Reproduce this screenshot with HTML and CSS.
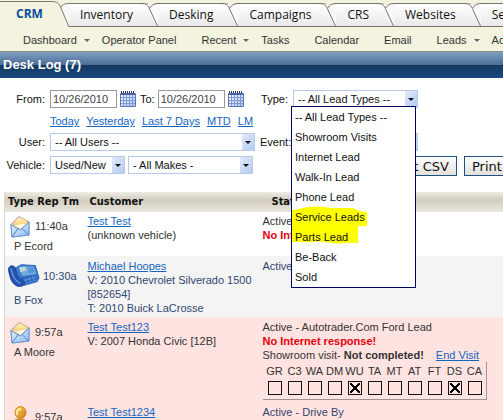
FILE: index.html
```html
<!DOCTYPE html>
<html lang="en">
<head>
<meta charset="utf-8">
<title>Desk Log</title>
<link rel="stylesheet" href="styles.css">
</head>
<body>
<svg class="defs" aria-hidden="true">
  <defs>
    <linearGradient id="g-env" x1="0" y1="0" x2="1" y2="1"><stop offset="0" stop-color="#e4f3fd"/><stop offset="1" stop-color="#8dbcf0"/></linearGradient>
    <linearGradient id="g-flap" x1="0" y1="0" x2="0" y2="1"><stop offset="0" stop-color="#fff3c4"/><stop offset="1" stop-color="#f3bf4c"/></linearGradient>
    <linearGradient id="g-man" x1="0" y1="0" x2="1" y2="1"><stop offset="0" stop-color="#ffd766"/><stop offset="1" stop-color="#cf7a12"/></linearGradient>
    <linearGradient id="g-cal" x1="0" y1="0" x2="1" y2="1"><stop offset="0" stop-color="#fff"/><stop offset="1" stop-color="#a9c0ee"/></linearGradient>
    <symbol id="edge" viewBox="0 0 20 24" preserveAspectRatio="none"><path d="M0 .5C7 .5 8 2 10 7L18 24H20V.5Z" fill="#f8f8f8"/><path d="M8 0H16L10 5Z" fill="#f3f3df"/><path d="M0 .5C7 .5 8 2 10 7L18 24" fill="none" stroke="#77776f"/><path d="M10 5C12 1 15 .5 20 .5" fill="none" stroke="#77776f"/></symbol>
    <symbol id="edge-active" viewBox="0 0 20 26"><path d="M0 .5C6 .5 8 2 10 7L18 26H20V2.500H13L10 0H0Z" fill="#f8f8f8"/><path d="M0 0H20V2.500H14L10 7 0 2Z" fill="#f3f3df"/><path d="M0 .5C6 .5 8 2 10 7L18 26H0Z" fill="#f3f3df"/><path d="M0 .5C6 .5 8 2 10 7L18 26M10 6C12 3 14 2.500 20 2.500" fill="none" stroke="#77776f"/></symbol>
    <symbol id="cal" viewBox="0 0 16 16"><path d="M1 3H15V15H1Z" fill="url(#g-cal)"/><path d="M3.500 4V15M6.500 4V15M9.500 4V15M12.500 4V15M1 6.500H15M1 9.500H15M1 12.500H15" stroke="#7f98d6" stroke-width="1"/><path d="M.5 2.500H15.500V15.500H.5Z" fill="none" stroke="#5b77b9"/><path d="M1 3H15" stroke="#4863a5" stroke-width="2"/><path d="M1 1H15" stroke="#2d3454" stroke-width="2" stroke-dasharray="1 1"/></symbol>
    <symbol id="mail" viewBox="0 0 20 23"><path d="M1 9.500 9 1.500 19 7V20L2 22Z" fill="url(#g-env)" stroke="#8f99bd"/><path d="M3 8.500C6 3.500 9 2 10 2L17.500 6 17 10 10 14 3.500 11Z" fill="url(#g-flap)" stroke="#d6aa61" stroke-width=".6"/><path d="M4 10.500 16 8.500 11 14Z" fill="#fffbea"/><path d="M1 9.500 10 15 19 7V20L2 22Z" fill="url(#g-env)" stroke="#6c95d6"/><path d="M2 22 8 13.500M19 20 12 13.500" fill="none" stroke="#5585d1"/></symbol>
    <symbol id="phone" viewBox="0 0 34 25"><path d="M7 5 14 1 29 2 33 15 31 19 17 23 12 19Z" fill="#3d7dce" stroke="#2860b0"/><path d="M12 3 27 3 30 11 15 13Z" fill="#74abdf"/><path d="M12 4 18 3 20 7 13 9Z" fill="#b8d6d8"/><path d="M21 4H26L28 9 22 10Z" fill="#5590d7"/><path d="M14 14 31 12 32 16 17 21Z" fill="#2864ba"/><path d="M18 15 20 20M22 14 24 19M26 13 28 18M16 18 31 14" stroke="#6ea3e6" stroke-width=".8"/><path d="M1 4C3 1 7 2 8 5L9 10C10 14 13 16 15 17 19 19 18 24 13 24 8 25 3 19 2 13 1 9 0 7 1 4Z" fill="#2552ad" stroke="#1a4498"/><path d="M3 5C5 12 6 17 13 21" fill="none" stroke="#6794e0" stroke-width="1.500"/></symbol>
    <symbol id="man" viewBox="0 0 18 22"><path d="M1 21C1 15 4 13 9 13S17 15 17 21Z" fill="url(#g-man)" stroke="#b96d16"/><ellipse cx="9.500" cy="6.500" rx="5.500" ry="6" fill="url(#g-man)" stroke="#c9861f"/><path d="M6 9C5 5 7 3 10 3" fill="none" stroke="#fff0a8" stroke-width="2"/><path d="M6 14 9 18 12 14Z" fill="#7d94c1"/></symbol>
  </defs>
</svg>

<nav class="tabs">
  <a class="tab tab-active" href="#">CRM<svg class="edge"><use href="#edge-active"/></svg></a>
  <a class="tab" href="#">Inventory<svg class="edge"><use href="#edge"/></svg></a>
  <a class="tab" href="#">Desking<svg class="edge"><use href="#edge"/></svg></a>
  <a class="tab" href="#">Campaigns<svg class="edge"><use href="#edge"/></svg></a>
  <a class="tab" href="#">CRS<svg class="edge"><use href="#edge"/></svg></a>
  <a class="tab" href="#">Websites<svg class="edge"><use href="#edge"/></svg></a>
  <a class="tab tab-last" href="#">Service</a>
</nav>

<nav class="subnav">
  <a class="has-menu" href="#">Dashboard</a>
  <a href="#">Operator Panel</a>
  <a class="has-menu" href="#">Recent</a>
  <a href="#">Tasks</a>
  <a href="#">Calendar</a>
  <a href="#">Email</a>
  <a class="has-menu" href="#">Leads</a>
  <a href="#">Admin</a>
</nav>

<h1 class="title">Desk Log (7)</h1>

<form class="filters">
  <label for="from">From:</label>
  <div class="dates">
    <input class="date" id="from" type="text" value="10/26/2010">
    <button class="cal" type="button" aria-label="Pick start date"><svg><use href="#cal"/></svg></button>
    <label for="to">To:</label>
    <input class="date" id="to" type="text" value="10/26/2010">
    <button class="cal" type="button" aria-label="Pick end date"><svg><use href="#cal"/></svg></button>
  </div>
  <label for="type">Type:</label>
  <div class="combo combo-type">
    <select id="type"><option>-- All Lead Types --</option></select>
    <ul class="menu">
      <li><svg class="marker" viewBox="0 0 76 38"><path d="M0 4C8 4 10 1 18 1 28 -1 38 3 46 2 56 2 62 1 67 5L75 6V20H66V37H52C40 39 30 34 20 36 12 37 6 35 0 36Z" fill="#ff0"/></svg>-- All Lead Types --</li>
      <li>Showroom Visits</li>
      <li>Internet Lead</li>
      <li>Walk-In Lead</li>
      <li>Phone Lead</li>
      <li>Service Leads</li>
      <li>Parts Lead</li>
      <li>Be-Back</li>
      <li>Sold</li>
    </ul>
  </div>

  <div class="ranges">
    <a href="#">Today</a><a href="#">Yesterday</a><a href="#">Last 7 Days</a><a href="#">MTD</a><a href="#">LM</a>
  </div>

  <label for="user">User:</label>
  <div class="combo"><select id="user"><option>-- All Users --</option></select></div>
  <label for="event">Event:</label>
  <div class="combo combo-type"><select id="event"><option></option></select></div>

  <label for="vehicle">Vehicle:</label>
  <div class="pair">
    <div class="combo combo-short"><select id="vehicle"><option>Used/New</option></select></div>
    <div class="combo combo-make"><select aria-label="Make"><option>- All Makes -</option></select></div>
  </div>
  <div class="actions">
    <button type="button">Export CSV</button>
    <button type="button">Print</button>
  </div>
</form>

<table class="log">
  <thead>
    <tr><th class="col-rep">Type Rep Tm</th><th class="col-customer">Customer</th><th class="col-status">Status</th></tr>
  </thead>
  <tbody>
    <tr>
      <td><div class="rep"><svg class="mail"><use href="#mail"/></svg>11:40a</div><div class="name">P Ecord</div></td>
      <td><a href="#">Test Test</a><br>(unknown vehicle)</td>
      <td>Active<br><b class="alert">No Internet</b></td>
    </tr>
    <tr class="row-alt">
      <td><div class="rep"><svg class="phone"><use href="#phone"/></svg>10:30a</div><div class="name">B Fox</div></td>
      <td><a href="#">Michael Hoopes</a><br>V: 2010 Chevrolet Silverado 1500<br>[852654]<br>T: 2010 Buick LaCrosse</td>
      <td>Active</td>
    </tr>
    <tr class="row-late">
      <td><div class="rep"><svg class="mail"><use href="#mail"/></svg>9:57a</div><div class="name">A Moore</div></td>
      <td><a href="#">Test Test123</a><br>V: 2007 Honda Civic [12B]</td>
      <td>Active - Autotrader.Com Ford Lead<br><b class="alert">No Internet response!</b>
        <div class="visit"><span>Showroom visit- <b>Not completed!</b></span><a href="#">End Visit</a></div>
        <div class="steps">
          <label>GR<input type="checkbox"></label>
          <label>C3<input type="checkbox"></label>
          <label>WA<input type="checkbox"></label>
          <label>DM<input type="checkbox"></label>
          <label>WU<input type="checkbox" checked></label>
          <label>TA<input type="checkbox"></label>
          <label>MT<input type="checkbox"></label>
          <label>AT<input type="checkbox"></label>
          <label>FT<input type="checkbox"></label>
          <label>DS<input type="checkbox" checked></label>
          <label>CA<input type="checkbox"></label>
        </div>
      </td>
    </tr>
    <tr class="row-late">
      <td><div class="rep"><svg class="man"><use href="#man"/></svg>9:57a</div></td>
      <td><a href="#">Test Test1234</a></td>
      <td class="drive-by">Active - Drive By</td>
    </tr>
  </tbody>
</table>
</body>
</html>
```
FILE: styles.css
```css
* { box-sizing: border-box; }

html { height: 100%; overflow: hidden; }

body {
  margin: 0;
  height: 100%;
  overflow: hidden;
  background: #fff;
  color: #333;
  font: 11px/14px "Liberation Sans", Arial, sans-serif;
}

.defs { position: absolute; width: 0; height: 0; }

/* Main tabs */
.tabs {
  display: flex;
  align-items: flex-end;
  height: 27px;
  background: #f3f3df;
}

.tab {
  position: relative;
  flex: none;
  height: 24px;
  padding: 0 25px 0 11px;
  border-top: 1px solid #77776f;
  border-bottom: 1px solid #77776f;
  background: linear-gradient(#fff, #e9e9e9);
  color: #111;
  font: 12px/21px "Open Sans", "Noto Sans", sans-serif;
  text-decoration: none;
}

.tab-active {
  height: 26px;
  padding: 0 26px 0 16px;
  border-bottom-color: #f3f3df;
  background: #f3f3df;
  color: #0b4da2;
  font-weight: bold;
  line-height: 24px;
}

.tab-last { flex: 1 0 auto; }

.edge {
  position: absolute;
  top: -1px;
  right: -2px;
  width: 20px;
  height: 24px;
}

.tab-active .edge { height: 26px; }

/* Secondary navigation */
.subnav {
  display: flex;
  gap: 25px;
  height: 25px;
  padding-left: 23px;
  border-bottom: 1px solid #8d8d85;
  background: #f3f3df;
  line-height: 27px;
  white-space: nowrap;
}

.subnav a { position: relative; color: #333; text-decoration: none; }

.has-menu::after {
  content: "";
  position: absolute;
  top: 12px;
  left: calc(100% + 7px);
  border: 3px solid transparent;
  border-top-color: #666;
  border-bottom: 0;
}

.title {
  margin: 0;
  height: 26px;
  padding-left: 3px;
  background: linear-gradient(#7f9fc2, #4a6d97 50%, #16375f 50%, #174a80);
  color: #fff;
  font-size: 13px;
  line-height: 25px;
}

/* Filters */
.filters {
  display: grid;
  grid-template-columns: 45px 205px 28px 1fr;
  grid-template-rows: 19px 14px 18px 19px;
  gap: 5px;
  padding: 12px 0 17px;
  color: #111;
  white-space: nowrap;
}

.filters label { line-height: 19px; text-align: right; }

.dates, .pair, .actions { display: flex; gap: 3px; }

.dates label { padding-left: 1px; }

.date {
  width: 67px;
  height: 18px;
  padding: 0 2px;
  border: 1px solid #999;
  background: #fff;
  color: #444;
  font: inherit;
}

.cal { width: 16px; height: 16px; margin-top: 1px; padding: 0; border: 0; background: none; }
.cal svg { display: block; width: 16px; height: 16px; }

.ranges { grid-column: 2 / -1; display: flex; gap: 7px; }

a { color: #1565c0; }

.combo { position: relative; height: 18px; }
.combo-type { width: 125px; }
.combo-short { width: 75px; }
.combo-make { width: 125px; }

.combo select {
  appearance: none;
  width: 100%;
  height: 18px;
  padding: 0 14px 0 4px;
  border: 1px solid #b6cbea;
  border-radius: 0;
  background: #fff;
  color: #111;
  font: inherit;
}

.combo::before {
  content: "";
  position: absolute;
  top: 1px;
  right: 1px;
  width: 12px;
  height: 16px;
  background: linear-gradient(135deg, #e1ebfb, #b3cbf3);
}

.combo::after {
  content: "";
  position: absolute;
  top: 8px;
  right: 4px;
  border: 3px solid transparent;
  border-top-color: #111;
  border-bottom: 0;
}

.menu {
  position: absolute;
  z-index: 3;
  top: 16px;
  left: -2px;
  width: 125px;
  margin: 0;
  padding: 0 3px;
  border: 1px solid #000066;
  background: #fff;
  color: #111;
  line-height: 20px;
  list-style: none;
}

.menu li { position: relative; z-index: 1; }
.menu li:first-child { z-index: 0; }

.marker { position: absolute; top: 99px; left: -3px; width: 76px; height: 38px; }

.actions { grid-column: 4; gap: 7px; padding-left: 75px; }

.actions button {
  flex: none;
  height: 20px;
  padding: 0 7px;
  border: 1px solid #1c5180;
  background: linear-gradient(#fff, #e2e0dc);
  color: #111;
  font: 13px/17px "DejaVu Sans", Verdana, sans-serif;
}

/* Desk log */
.log {
  width: calc(100% - 4px);
  margin-left: 4px;
  border-collapse: collapse;
  border-left: 1px solid #ddd5d0;
}

.log th {
  height: 20px;
  padding: 0 0 0 3px;
  background: linear-gradient(#efece3, #d2cdbf 40%, #e9e6db);
  color: #111;
  font: bold 11px/20px "DejaVu Sans Condensed", "DejaVu Sans", sans-serif;
  text-align: left;
  white-space: nowrap;
}

.log .col-rep { width: 80px; }
.log .col-customer { width: 175px; padding-left: 5px; }
.log .col-status { padding-left: 12px; }

.log td { padding: 2px 0 3px 3px; vertical-align: top; white-space: nowrap; }
.log td:first-child { padding-left: 5px; }

.log .row-late { background: #ffe3e0; }
.log .row-alt { background: #f4f4f4; color: #33466f; }
.log .row-alt td, .log .row-late td { padding-top: 3px; padding-bottom: 2px; }

.rep { display: flex; align-items: center; gap: 5px; height: 24px; }
.row-alt .rep { height: 33px; gap: 3px; margin-left: -2px; }
.name { padding: 1px 0 0 4px; }

.mail { flex: none; width: 20px; height: 23px; }
.phone { flex: none; width: 32px; height: 25px; }
.man { flex: none; width: 20px; height: 22px; }

.alert { color: #e8000d; }
.drive-by { color: #33466f; }

.visit { display: flex; gap: 12px; }

.steps {
  display: flex;
  width: 224px;
  padding: 1px 1px 4px 2px;
  border-right: 1px solid #a39594;
  border-bottom: 1px solid #a39594;
}

.steps label {
  display: flex;
  flex-direction: column;
  align-items: center;
  gap: 2px;
  width: 20px;
  line-height: 16px;
}

.steps input {
  appearance: none;
  width: 14px;
  height: 14px;
  margin: 0;
  border: 1px solid #111;
}

.steps input:checked {
  background:
    linear-gradient(45deg, transparent 42%, #000 42%, #000 58%, transparent 58%) center / 10px 10px no-repeat,
    linear-gradient(-45deg, transparent 42%, #000 42%, #000 58%, transparent 58%) center / 10px 10px no-repeat;
}
```
